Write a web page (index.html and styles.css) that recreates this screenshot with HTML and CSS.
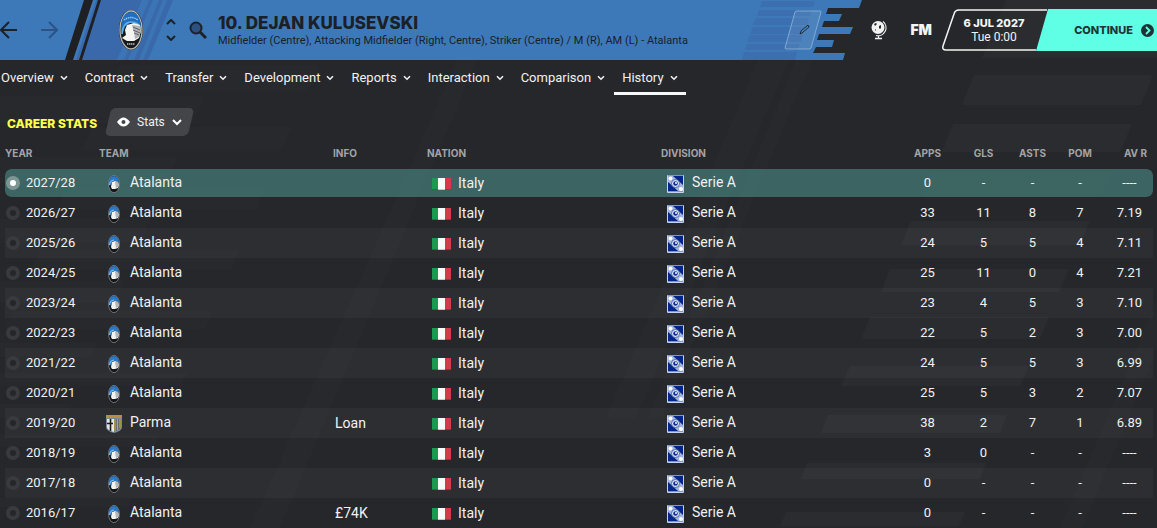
FILE: index.html
```html
<!DOCTYPE html>
<html lang="en">
<head>
<meta charset="utf-8">
<title>Dejan Kulusevski - Career Stats</title>
<meta name="viewport" content="width=device-width, initial-scale=1">
<link rel="stylesheet" href="styles.css">
</head>
<body>
<svg class="defs" aria-hidden="true">
  <symbol id="crest" viewBox="0 0 24 40">
    <ellipse cx="12" cy="20" rx="12" ry="20" fill="#17191d"/>
    <ellipse cx="12" cy="20" rx="11" ry="19" fill="none" stroke="#b9b9b2" stroke-width="1.300"/>
    <path d="M2 20C2 8 6 2 12 2s10 6 10 17l-4-5-7-1-5 4-3 8z" fill="#1f6fc0"/>
    <path d="M5 10q7-5 14 0" fill="none" stroke="#9cc6ea" stroke-width="1.500" stroke-dasharray="1.500 .7"/>
    <path d="M3 24q1-12 9-12 8 0 9 6" fill="none" stroke="#63aee8" stroke-width="1.500"/>
    <path d="M8 15l7-2 6 2 1 6-2 7-5 3H8l-5-3 4-3-1-5z" fill="#f4f4f2"/>
    <path d="M13 15l8 1 1 5-2 6-4 2-1-7z" fill="#b0b3b5"/>
    <path d="M14 17l7 3M14 20l7 3M15 23l5 2" stroke="#4c5054" stroke-width=".8"/>
    <path d="M8 34h8" stroke="#9a9a96" stroke-width="2" stroke-dasharray="1.400 .6"/>
  </symbol>
  <symbol id="badge" viewBox="0 0 12 18">
    <ellipse cx="6" cy="9" rx="5.500" ry="8.700" fill="#15171b" stroke="#8e9294" stroke-width=".7"/>
    <path d="M1 8C1 4 3 1 6 1s5 3 5 7L8 6H5L2 11z" fill="#2a78c8"/>
    <path d="M1.500 10Q2 5.500 6 5" fill="none" stroke="#7dbcf0" stroke-width="1.200"/>
    <path d="M4 7l3-1 3 1 1 3-1 3-3 1H4l-1-2z" fill="#f2f2f0"/>
    <path d="M7 7l3 0 1 3-1 2-2 1z" fill="#b3b5b6"/>
  </symbol>
  <symbol id="parma" viewBox="0 0 16 18">
    <path d="M0 0h16v12q0 4-8 6-8-2-8-6z" fill="#77879c"/>
    <path d="M1 4h14v8q0 3-7 5-7-2-7-5z" fill="#e6e7e6"/>
    <path d="M0 0h16v3H0z" fill="#b39335"/>
    <path d="M4.500 4v12M1 8.500h6" stroke="#17191d" stroke-width="1.600"/>
    <path d="M8 4h7v8q0 3-7 5z" fill="#5a6878"/>
    <path d="M9 4v12M11.500 4v11M14 4v9" stroke="#c9a43a" stroke-width="1.300"/>
  </symbol>
  <symbol id="italy" viewBox="0 0 19 12">
    <path d="M0 0h7v12H0z" fill="#199a50"/><path d="M6 0h7v12H6z" fill="#fafafa"/><path d="M13 0h6v12h-6z" fill="#d23c48"/>
    <path d="M0 11h19v1H0z" fill="#000" opacity=".2"/>
  </symbol>
  <symbol id="serie" viewBox="0 0 17 18">
    <rect width="17" height="18" rx="1" fill="#c3d0ee"/>
    <rect x="1" y="1" width="15" height="15" fill="#03268c"/>
    <path d="M1 1h5l10 9v6h-5L1 7z" fill="#9fb1dc"/>
    <circle cx="3.500" cy="3.500" r="2" fill="#fff"/><circle cx="14" cy="14" r="2" fill="#fff"/>
    <circle cx="8.500" cy="8.500" r="4" fill="#dfe6f6" stroke="#0b2d8f" stroke-width=".6"/>
    <circle cx="8.500" cy="8.500" r="2.300" fill="#0b2d8f"/><circle cx="9" cy="8" r="1" fill="#fff"/>
    <path d="M1 .5h15M1 16.500h15" stroke="#7f96cd"/>
  </symbol>
  <symbol id="chev" viewBox="0 0 8 6"><path d="M1 1.200l3 3 3-3" fill="none" stroke="currentColor" stroke-width="1.600"/></symbol>
</svg>

<div class="page">
  <svg class="backdrop" width="1157" height="528" viewBox="0 0 1157 528" aria-hidden="true">
    <g fill="#fff" fill-opacity=".022">
      <path d="M1006 0h163l-24 58H982zM974 75h179l-12 30H962zM953 124h179l-12 28H942zM932 172h180l-11 25H921zM911 221h179l-10 24H901zM890 269h179l-10 23H881zM870 317h179l-9 22H861zM850 366h179l-9 20H841zM828 415h179l-7 18H821zM807 463h179l-6 16H801zM786 512h179l-6 14H780z"/>
    </g>
    <g fill="#fff" fill-opacity=".012">
      <path d="M119 65h200l-11 26H108zM0 96h204l-11 27H0zM92 127h200l-11 23H82zM0 157h178l-11 26H0zM66 188h200l-10 21H57zM0 219h151l-10 24H0zM40 250h200l-9 19H31zM0 281h124l-9 22H0zM13 311h200l-8 18H5zM0 343h98l-7 14H0zM0 373h187l-6 13H0zM0 404h72l-6 14H0zM0 435h160l-5 12H0zM0 498h132l-4 9H0z"/>
      <path d="M457 60h20L280 528h-30zM758 60h31L636 418h-30zM796 60h16L662 418h-14zM1157 300v50l-75 178h-22z"/>
    </g>
  </svg>

  <header class="topbar">
    <svg class="art-left" width="220" height="60" viewBox="0 0 220 60" aria-hidden="true">
      <path d="M94 0h79l-25 60H74z" fill="#3a69ab"/>
      <path d="M92 0h4L76 60h-4z" fill="#3d79b8"/>
      <path d="M142 0h7l-25 60h-7zM153 0h6l-25 60h-6zM163 0h4l-24 60h-4z" fill="#3d79b8" opacity=".75"/>
      <path d="M84 0h9L73 60h-8zM98 0h3L82 60h-3z" fill="#1e2023"/>
    </svg>
    <svg class="art-right" width="420" height="60" viewBox="0 0 420 60" aria-hidden="true">
      <g fill="#3b6fb0">
        <path d="M25 1h53l-2 6H23zM22 10h53l-2 6H20zM19 18h53l-2 7H16zM16 27h53l-3 7H13zM13 35h53l-2 7H10zM10 44h53l-3 6H8zM7 52h53l-2 8H5z"/>
      </g>
      <path d="M125 0l-3 8H91l-2 6h16l-3 7H87l-2 6h31l-3 7H82l-2 6h17l-2 7H79l-3 6h32l-2 7h314V0z" fill="#26272b"/>
      <path d="M269 0h151v58H245z" fill="#fff" fill-opacity=".022"/>
    </svg>

    <nav class="history" aria-label="Page history">
      <button class="icon" aria-label="Back"><svg width="18" height="20" viewBox="0 0 18 20"><path d="M17 10H1M9 2L1 10l8 8" fill="none" stroke="#1b2228" stroke-width="2"/></svg></button>
      <button class="icon" aria-label="Forward"><svg width="18" height="20" viewBox="0 0 18 20"><path d="M1 10h16M9 2l8 8-8 8" fill="none" stroke="#2b5387" stroke-width="2"/></svg></button>
    </nav>
    <svg class="club" width="24" height="40" role="img" aria-label="Atalanta"><use href="#crest"/></svg>
    <div class="spin">
      <button class="icon" aria-label="Previous player"><svg width="10" height="6" viewBox="0 0 10 6"><path d="M1 5l4-4 4 4" fill="none" stroke="#1b2228" stroke-width="2"/></svg></button>
      <button class="icon" aria-label="Next player"><svg width="10" height="6" viewBox="0 0 10 6"><path d="M1 1l4 4 4-4" fill="none" stroke="#1b2228" stroke-width="2"/></svg></button>
    </div>
    <button class="icon" aria-label="Search"><svg width="18" height="18" viewBox="0 0 18 18"><circle cx="7" cy="7" r="5.500" fill="#2c5180" stroke="#1b2228" stroke-width="2"/><path d="M11 11l6 6" stroke="#1b2228" stroke-width="3"/></svg></button>
    <div class="who">
      <h1>10. DEJAN KULUSEVSKI</h1>
      <p>Midfielder (Centre), Attacking Midfielder (Right, Centre), Striker (Centre) / M (R), AM (L) - Atalanta</p>
    </div>
    <div class="tools">
      <button class="icon" aria-label="Edit"><svg width="38" height="40" viewBox="0 0 38 40"><path d="M12 1h24q1 0 1 1L27 38q-1 1-2 1H2q-1 0-1-1L11 2z" fill="#fff" fill-opacity=".08" stroke="#9dbbe0" stroke-opacity=".7"/><path d="M16 24l1-3 7-6 1 2-7 6z" fill="#4f83be" stroke="#1d2a3c"/></svg></button>
      <button class="icon world" aria-label="World"><svg width="18" height="20" viewBox="0 0 18 20"><circle cx="8" cy="7.500" r="6.500" fill="#f2f2f2"/><path d="M13 1.500a8 8 0 0 1-7 14" fill="none" stroke="#f2f2f2" stroke-width="1.200"/><path d="M4 4l2-1 1 1-2 2zM9 6l2-1v3l-1 1-1-1zM5 9l1 1-1 1z" fill="#26272b"/><path d="M8.500 16v2M5 18.500h7" stroke="#f2f2f2" stroke-width="1.300"/></svg></button>
      <button class="icon fm">FM</button>
      <div class="date">
        <svg width="106" height="42" viewBox="0 0 106 42" aria-hidden="true"><path d="M105 1H17q-4 0-5 4L1 37q-1 4 3 4h90" fill="none" stroke="#f4f4f4" stroke-width="1.500"/></svg>
        <strong>6 JUL 2027</strong><span>Tue 0:00</span>
      </div>
      <button class="continue">CONTINUE<svg width="13" height="13" viewBox="0 0 13 13"><circle cx="6.500" cy="6.500" r="6.500" fill="#1f3336"/><path d="M5 3l3.500 3.500L5 10" fill="none" stroke="#5fffe6" stroke-width="1.800"/></svg></button>
    </div>
  </header>

  <nav class="tabs" aria-label="Player sections">
    <a href="#overview">Overview<svg><use href="#chev"/></svg></a>
    <a href="#contract">Contract<svg><use href="#chev"/></svg></a>
    <a href="#transfer">Transfer<svg><use href="#chev"/></svg></a>
    <a href="#development">Development<svg><use href="#chev"/></svg></a>
    <a href="#reports">Reports<svg><use href="#chev"/></svg></a>
    <a href="#interaction">Interaction<svg><use href="#chev"/></svg></a>
    <a href="#comparison">Comparison<svg><use href="#chev"/></svg></a>
    <a href="#history" class="on" aria-current="page">History<svg><use href="#chev"/></svg></a>
  </nav>

  <main>
    <div class="panel-head">
      <h2>CAREER STATS</h2>
      <button class="view"><svg width="13" height="10" viewBox="0 0 13 10"><path d="M0 5q6.500-9 13 0-6.500 9-13 0z" fill="#fff"/><circle cx="6.500" cy="5" r="2" fill="#444549"/></svg><span>Stats</span><svg width="10" height="7" viewBox="0 0 10 7"><path d="M1 1l4 4 4-4" fill="none" stroke="#fff" stroke-width="2"/></svg></button>
    </div>
    <table>
      <thead><tr><th class="c-year">YEAR</th><th class="c-team">TEAM</th><th class="c-info">INFO</th><th class="c-nation">NATION</th><th class="c-div">DIVISION</th><th class="c-apps num">APPS</th><th class="c-gls num">GLS</th><th class="c-asts num">ASTS</th><th class="c-pom num">POM</th><th class="c-avr">AV R</th></tr></thead>
      <tbody>
        <tr><td><label><input type="radio" name="season" checked>2027/28</label></td><td class="team"><svg><use href="#badge"/></svg>Atalanta</td><td class="info"></td><td class="nation"><svg><use href="#italy"/></svg>Italy</td><td class="div"><svg><use href="#serie"/></svg>Serie A</td><td class="num">0</td><td class="num">-</td><td class="num">-</td><td class="num">-</td><td class="num">----</td></tr>
        <tr><td><label><input type="radio" name="season">2026/27</label></td><td class="team"><svg><use href="#badge"/></svg>Atalanta</td><td class="info"></td><td class="nation"><svg><use href="#italy"/></svg>Italy</td><td class="div"><svg><use href="#serie"/></svg>Serie A</td><td class="num">33</td><td class="num">11</td><td class="num">8</td><td class="num">7</td><td class="num">7.19</td></tr>
        <tr><td><label><input type="radio" name="season">2025/26</label></td><td class="team"><svg><use href="#badge"/></svg>Atalanta</td><td class="info"></td><td class="nation"><svg><use href="#italy"/></svg>Italy</td><td class="div"><svg><use href="#serie"/></svg>Serie A</td><td class="num">24</td><td class="num">5</td><td class="num">5</td><td class="num">4</td><td class="num">7.11</td></tr>
        <tr><td><label><input type="radio" name="season">2024/25</label></td><td class="team"><svg><use href="#badge"/></svg>Atalanta</td><td class="info"></td><td class="nation"><svg><use href="#italy"/></svg>Italy</td><td class="div"><svg><use href="#serie"/></svg>Serie A</td><td class="num">25</td><td class="num">11</td><td class="num">0</td><td class="num">4</td><td class="num">7.21</td></tr>
        <tr><td><label><input type="radio" name="season">2023/24</label></td><td class="team"><svg><use href="#badge"/></svg>Atalanta</td><td class="info"></td><td class="nation"><svg><use href="#italy"/></svg>Italy</td><td class="div"><svg><use href="#serie"/></svg>Serie A</td><td class="num">23</td><td class="num">4</td><td class="num">5</td><td class="num">3</td><td class="num">7.10</td></tr>
        <tr><td><label><input type="radio" name="season">2022/23</label></td><td class="team"><svg><use href="#badge"/></svg>Atalanta</td><td class="info"></td><td class="nation"><svg><use href="#italy"/></svg>Italy</td><td class="div"><svg><use href="#serie"/></svg>Serie A</td><td class="num">22</td><td class="num">5</td><td class="num">2</td><td class="num">3</td><td class="num">7.00</td></tr>
        <tr><td><label><input type="radio" name="season">2021/22</label></td><td class="team"><svg><use href="#badge"/></svg>Atalanta</td><td class="info"></td><td class="nation"><svg><use href="#italy"/></svg>Italy</td><td class="div"><svg><use href="#serie"/></svg>Serie A</td><td class="num">24</td><td class="num">5</td><td class="num">5</td><td class="num">3</td><td class="num">6.99</td></tr>
        <tr><td><label><input type="radio" name="season">2020/21</label></td><td class="team"><svg><use href="#badge"/></svg>Atalanta</td><td class="info"></td><td class="nation"><svg><use href="#italy"/></svg>Italy</td><td class="div"><svg><use href="#serie"/></svg>Serie A</td><td class="num">25</td><td class="num">5</td><td class="num">3</td><td class="num">2</td><td class="num">7.07</td></tr>
        <tr><td><label><input type="radio" name="season">2019/20</label></td><td class="team"><svg><use href="#parma"/></svg>Parma</td><td class="info">Loan</td><td class="nation"><svg><use href="#italy"/></svg>Italy</td><td class="div"><svg><use href="#serie"/></svg>Serie A</td><td class="num">38</td><td class="num">2</td><td class="num">7</td><td class="num">1</td><td class="num">6.89</td></tr>
        <tr><td><label><input type="radio" name="season">2018/19</label></td><td class="team"><svg><use href="#badge"/></svg>Atalanta</td><td class="info"></td><td class="nation"><svg><use href="#italy"/></svg>Italy</td><td class="div"><svg><use href="#serie"/></svg>Serie A</td><td class="num">3</td><td class="num">0</td><td class="num">-</td><td class="num">-</td><td class="num">----</td></tr>
        <tr><td><label><input type="radio" name="season">2017/18</label></td><td class="team"><svg><use href="#badge"/></svg>Atalanta</td><td class="info"></td><td class="nation"><svg><use href="#italy"/></svg>Italy</td><td class="div"><svg><use href="#serie"/></svg>Serie A</td><td class="num">0</td><td class="num">-</td><td class="num">-</td><td class="num">-</td><td class="num">----</td></tr>
        <tr><td><label><input type="radio" name="season">2016/17</label></td><td class="team"><svg><use href="#badge"/></svg>Atalanta</td><td class="info">£74K</td><td class="nation"><svg><use href="#italy"/></svg>Italy</td><td class="div"><svg><use href="#serie"/></svg>Serie A</td><td class="num">0</td><td class="num">-</td><td class="num">-</td><td class="num">-</td><td class="num">----</td></tr>
      </tbody>
    </table>
  </main>
</div>
</body>
</html>
```
FILE: styles.css
```css
* { box-sizing: border-box; }
body { margin: 0; background: #26272b; color: #f1f2f2; font: 13px/20px Roboto, "Liberation Sans", sans-serif; }
h1, h2, p { margin: 0; }
.defs { display: none; }
svg { display: block; flex: none; }
button { font: inherit; color: inherit; border: 0; background: none; padding: 0; cursor: pointer; }
.page { position: relative; overflow: hidden; }
.backdrop { position: absolute; top: 0; right: 0; }

/* Top bar */
.topbar { position: relative; display: flex; align-items: center; height: 60px; background: #3d79b8; color: #1b2026; }
.topbar > * { position: relative; }
.topbar > .art-left { position: absolute; left: 0; top: 0; }
.topbar > .art-right { position: absolute; right: 0; top: 0; }
.history { display: flex; gap: 22px; margin-right: 61px; }
.club { margin-right: 23px; }
.spin { display: grid; gap: 10px; margin-right: 13px; }
.who { margin-left: 11px; padding-top: 3px; white-space: nowrap; }
.who h1 { font: 800 17px/18px Inter, "Liberation Sans", sans-serif; }
.who p { font-size: 11px; line-height: 18px; }
.tools { display: flex; align-items: center; margin-left: auto; color: #f4f4f4; }
.world { margin-left: 48px; }
.fm { margin: 0 10px 0 22px; font: 900 14px/20px Inter, "Liberation Sans", sans-serif; }
.date { position: relative; width: 106px; height: 42px; padding: 7px 2px 0 0; text-align: center; line-height: 14px; }
.date svg { position: absolute; left: 0; top: 0; }
.date strong, .date span { display: block; }
.date span { font-size: 12px; }
.date strong { font-size: 11px; font-family: Inter, "Liberation Sans", sans-serif; font-weight: 800; }
.continue { display: flex; align-items: center; justify-content: flex-end; gap: 8px; width: 121px; height: 42px; margin-left: -12px; padding-right: 3px; background: #5fffe6; color: #1f3336; clip-path: polygon(12px 0, 100% 0, 100% 100%, 0 100%); font: 800 11px/16px Inter, "Liberation Sans", sans-serif; }

/* Section tabs */
.tabs { position: relative; display: flex; gap: 1px; margin-left: -7px; }
.tabs a { display: flex; align-items: center; gap: 6px; height: 35px; padding: 3px 8px 0; border-bottom: 3px solid transparent; color: inherit; text-decoration: none; }
.tabs .on { border-color: #f7f8f8; }
.tabs svg { width: 8px; height: 6px; }

/* Career table */
main { position: relative; padding: 13px 4px 0 5px; }
.panel-head { display: flex; align-items: center; gap: 11px; height: 28px; padding-left: 2px; margin-bottom: 3px; }
h2 { color: #ffff4b; font: 800 12px/16px Inter, "Liberation Sans", sans-serif; padding-top: 4px; }
.view { position: relative; display: flex; align-items: center; gap: 7px; height: 28px; padding: 0 9px; font-size: 12px; }
.view::before { content: ""; position: absolute; inset: 0; border-radius: 5px; background: #444549; transform: skewX(-13deg); }
.view > * { position: relative; }
table { width: 100%; table-layout: fixed; border-collapse: separate; border-spacing: 0; }
th { height: 28px; padding: 0; text-align: left; color: #a3a4a6; font: 700 10px/16px Inter, "Liberation Sans", sans-serif; }
thead th { height: 29px; padding-bottom: 2px; }
.c-year, .c-info { width: 94px; }
.c-team, .c-nation { width: 234px; }
.c-apps { width: 57px; }
.c-gls { width: 55px; }
.c-asts { width: 43px; }
.c-pom { width: 52px; }
th.c-avr { width: 47px; padding-right: 6px; text-align: right; }
td { height: 30px; padding: 0 0 1px; border: solid transparent; border-width: 1px 0; white-space: nowrap; font-size: 14px; line-height: 20px; }
td svg { display: inline-block; vertical-align: middle; }
tbody tr:nth-child(odd) td { background: rgba(255, 255, 255, .035); }
tbody tr:first-child td { background: rgba(73, 142, 135, .6); background-clip: padding-box; }
tbody tr:first-child td:first-child { border-radius: 7px 0 0 7px; }
tbody tr:first-child td:last-child { border-radius: 0 7px 7px 0; }
th.num, td.num { text-align: center; }
td.num, td label { font-size: 13px; }
td label { display: flex; align-items: center; gap: 6px; padding-left: 1px; }
td input { appearance: none; width: 14px; height: 14px; margin: 0; border: 4px solid #393a3d; border-radius: 50%; background: #25262a; }
td input:checked { border-color: #7d9694; background: #fff; }
td.team { padding-left: 7px; }
.team svg { width: 16px; height: 18px; margin-right: 8px; }
td.info { padding-left: 2px; }
td.nation { padding-left: 5px; }
.nation svg { width: 19px; height: 12px; margin-right: 7px; }
td.div { padding-left: 6px; }
.div svg { width: 17px; height: 18px; margin-right: 8px; }
```
